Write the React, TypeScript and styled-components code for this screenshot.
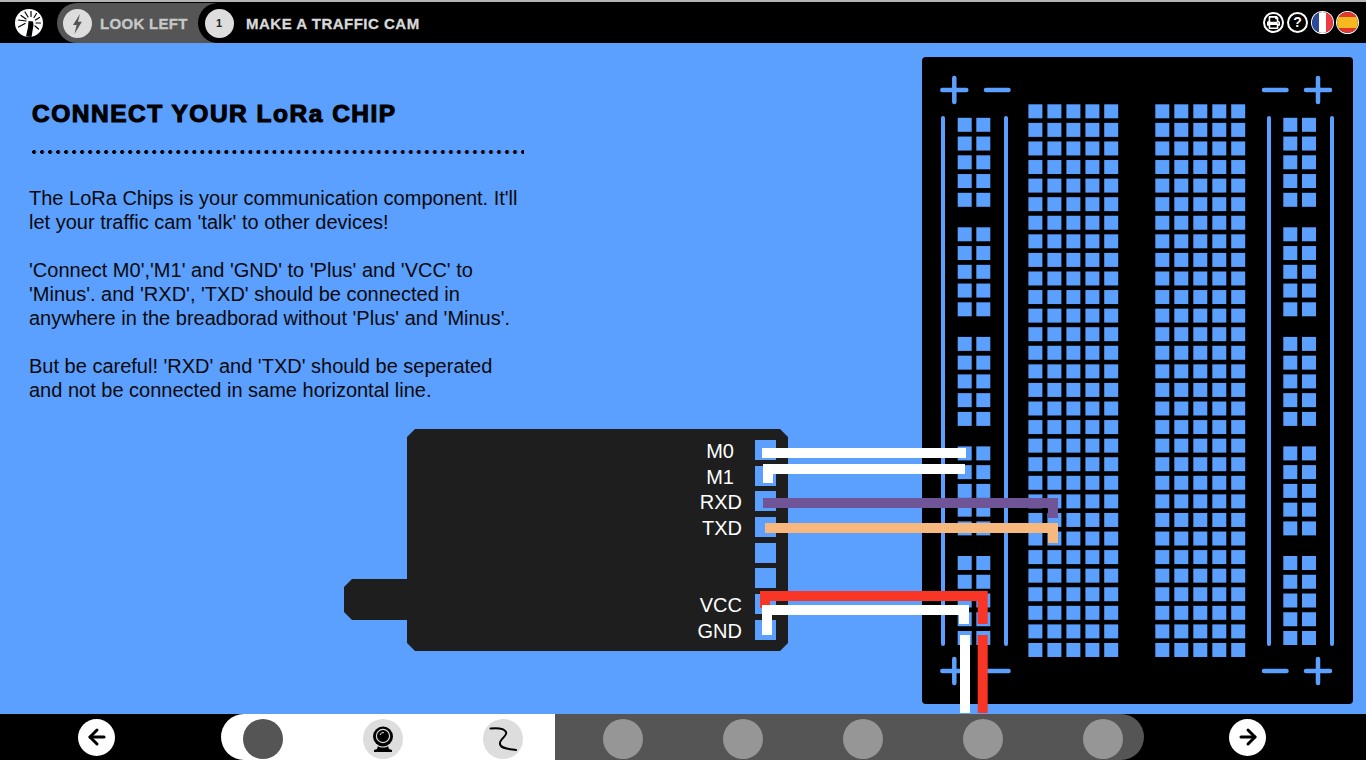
import styled, { createGlobalStyle } from 'styled-components';
import { ArrowLeft, ArrowRight } from 'lucide-react';
import { FaPrint } from 'react-icons/fa';

const BLUE = '#5b9fff';

const Global = createGlobalStyle`
  html, body { margin: 0; padding: 0; height: 100%; overflow: hidden; }
  body { font-family: "Liberation Sans", Arial, sans-serif; background: ${BLUE}; }
`;

const Page = styled.div`
  width: 1366px; height: 760px; display: flex; flex-direction: column; overflow: hidden;
`;

/* top bar */
const Header = styled.header`
  height: 43px; box-sizing: border-box; flex-shrink: 0; background: #000;
  border-top: 2px solid #b4b4b4; padding-top: 1px;
  display: flex; align-items: stretch;
`;
const LogoBox = styled.div`
  width: 57px; display: flex; align-items: center; justify-content: center;
  svg { margin-right: -1px; margin-top: -1px; }
`;
const LookPill = styled.div`
  width: 160px; margin-right: -19px; background: #555; border-radius: 20px 0 0 20px;
  display: flex; align-items: center; gap: 8px; padding-left: 6px; box-sizing: border-box;
`;
const TaskSection = styled.div`
  flex: 1; background: #000; border-radius: 20px 0 0 20px; position: relative;
  display: flex; align-items: center; gap: 12.5px; padding-left: 6.5px;
`;
const RoundBadge = styled.div`
  width: 29px; height: 29px; border-radius: 50%; background: #ddd; flex-shrink: 0;
  display: flex; align-items: center; justify-content: center;
  font-size: 11px; font-weight: 700; color: #222;
`;
const BarLabel = styled.span<{ $dim?: boolean }>`
  font-size: 15px; font-weight: 700; white-space: nowrap;
  letter-spacing: ${p => (p.$dim ? 0.3 : 0.5)}px;
  -webkit-text-stroke: 0.3px currentColor;
  color: ${p => (p.$dim ? '#c8c8c8' : '#d8d8d8')};
`;
const HeaderTools = styled.div`
  margin-left: auto; margin-right: 8px; margin-top: -2px; display: flex; align-items: center; gap: 3px;
`;
const ToolRound = styled.div`
  width: 21px; height: 21px; border: 2px solid #fff; border-radius: 50%; box-sizing: border-box;
  display: flex; align-items: center; justify-content: center;
  color: #fff; font-size: 14px; font-weight: 700;
`;
const Flag = styled.div<{ $bg: string }>`
  width: 21px; height: 21px; border-radius: 50%; background: ${p => p.$bg}; box-shadow: 0 0 0 1px #fff;
  margin: 0 0.5px;
`;

/* main stage */
const Main = styled.main`
  flex: 1; position: relative; display: flex; background: ${BLUE}; min-height: 0;
`;
const LeftColumn = styled.div`
  width: 922px; flex-shrink: 0; box-sizing: border-box; padding: 56.5px 0 0 29px;
  display: flex; flex-direction: column;
`;
const Title = styled.h1`
  margin: 0 0 0 3px; font-size: 24.5px; line-height: 28px; font-weight: 700; color: #000;
  letter-spacing: 1.5px; -webkit-text-stroke: 1.1px #000; white-space: nowrap;
`;
const DotRule = styled.div`
  margin: 22px 0 0 3px; width: 492px; height: 4px;
  background: radial-gradient(circle at 2px 2px, #000 1.8px, transparent 2.2px) 0 0 / 8.03px 4px repeat-x;
`;
const Body = styled.p`
  margin: 32.5px 0 0; font-size: 20px; line-height: 24px; color: #0a0a0a; white-space: nowrap;
`;

/* LoRa chip */
const ChipRow = styled.div`
  margin: 27px 0 0 315px; display: flex; align-items: flex-start;
`;
const ChipNub = styled.div`
  width: 63px; height: 41px; margin-top: 150px;
  background: #1e1e1e;
  clip-path: polygon(8px 0, 100% 0, 100% 100%, 8px 100%, 0 calc(100% - 8px), 0 8px);
`;
const ChipBody = styled.div`
  width: 381px; height: 222px; box-sizing: border-box; background: #1e1e1e; padding: 11px 12px 0 0;
  clip-path: polygon(8px 0, calc(100% - 8px) 0, 100% 8px, 100% calc(100% - 8px), calc(100% - 8px) 100%, 8px 100%, 0 calc(100% - 8px), 0 8px);
  display: flex; flex-direction: column; gap: 5.7px;
`;
const PinRow = styled.div`
  height: 20px; display: flex; align-items: center; justify-content: flex-end;
`;
const PinLabel = styled.span<{ $inset?: boolean }>`
  font-size: 20px; color: #fff; padding-top: 3px; margin-right: ${p => (p.$inset ? 21 : 13)}px;
`;
const PinPad = styled.div`
  width: 21px; height: 20px; background: ${BLUE};
`;

/* breadboard */
const Board = styled.svg`
  flex-shrink: 0; margin-top: 14px; width: 431px; height: 647px; display: block;
`;
const Wires = styled.svg`
  position: absolute; left: 0; top: 0; width: 1366px; height: 671px; pointer-events: none;
`;

/* bottom nav */
const Footer = styled.footer`
  height: 46px; flex-shrink: 0; background: #000; display: flex; align-items: center;
  padding-left: 78px; gap: 0;
`;
const ArrowBtn = styled.button<{ $before?: number; $after?: number }>`
  width: 37px; height: 37px; border-radius: 50%; border: 0; padding: 0; background: #fff; color: #000;
  margin: 0 ${p => p.$after ?? 0}px 0 ${p => p.$before ?? 0}px; flex-shrink: 0;
  display: flex; align-items: center; justify-content: center;
`;
const Track = styled.div`
  display: flex; height: 46px;
`;
const TrackDone = styled.div`
  width: 334px; box-sizing: border-box; background: #fff; border-radius: 23px 0 0 23px;
  padding: 5px 0 0 22px; display: flex; gap: 80px;
`;
const TrackTodo = styled.div`
  width: 589px; box-sizing: border-box; background: #555; border-radius: 0 23px 23px 0;
  padding: 5px 0 0 48px; display: flex; gap: 80px;
`;
const StepDot = styled.div<{ $tone: 'active' | 'done' | 'todo' }>`
  width: 40px; height: 40px; border-radius: 50%; flex-shrink: 0;
  background: ${p => (p.$tone === 'active' ? '#555' : p.$tone === 'done' ? '#ddd' : '#969696')};
  display: flex; align-items: center; justify-content: center;
`;

const Logo = () => (
  <svg width="30" height="30" viewBox="0 0 30 30">
    <circle cx="15" cy="15" r="14" fill="#fff" />
    <g stroke="#000" strokeWidth="1.2" strokeLinecap="round">
      <path d="M12 13 L4.5 12" />
      <path d="M12 11 L7 7.5" />
      <path d="M14 9 L11 4" />
      <path d="M17 8.5 L17 3.5" />
      <path d="M20 9.5 L22.5 5.5" />
      <path d="M21.5 12 L25.5 9.5" />
      <path d="M22 15 L26.5 15" />
      <path d="M21 18 L24.5 21" />
      <path d="M11 15.5 L4.5 19" />
    </g>
    <path d="M14.5 13 L19 13.5 L19.5 17 L17.5 29 L12 28.5 L14 19 Z" fill="#000" />
  </svg>
);

const Bolt = () => (
  <svg width="29" height="29" viewBox="0 0 29 29">
    <path d="M17 5 L10 16 L13.6 16 L11.5 25 L18.8 12.8 L15 12.8 Z" fill="#555" />
  </svg>
);

const WebcamIcon = () => (
  <svg width="26" height="28" viewBox="0 0 26 28">
    <circle cx="13" cy="11.5" r="10" fill="#000" />
    <circle cx="13" cy="11" r="6.6" fill="none" stroke="#ddd" strokeWidth="1.2" />
    <path d="M10 10 A3.4 3.4 0 0 1 14 7.6" fill="none" stroke="#ddd" strokeWidth="1" />
    <path d="M8 21 C9 23 17 23 18 21 L19 24 L22 25 L22 27 L4 27 L4 25 L7 24 Z" fill="#000" />
  </svg>
);

const WireIcon = () => (
  <svg width="40" height="40" viewBox="0 0 40 40">
    <path d="M7.5 9.5 C13 9 21 9 23 13 C25 17 16 20 17 25 C18 30 26 30 33 31" fill="none" stroke="#000" strokeWidth="2" strokeLinecap="round" />
  </svg>
);

const range = (n: number) => Array.from({ length: n }, (_, i) => i);

// board coordinates are page coordinates minus the board corner (922, 57)
const Cross = ({ x, y }: { x: number; y: number }) => (
  <path d={`M${x - 12} ${y} H${x + 12} M${x} ${y - 12} V${y + 12}`} stroke={BLUE} strokeWidth="4.5" strokeLinecap="round" />
);
const Dash = ({ x, y }: { x: number; y: number }) => (
  <path d={`M${x + 2} ${y} H${x + 24.5}`} stroke={BLUE} strokeWidth="4.5" strokeLinecap="round" />
);
const Rail = ({ x }: { x: number }) => (
  <path d={`M${x} 61 V587`} stroke={BLUE} strokeWidth="4" strokeLinecap="round" />
);

const railGroups = [60.8, 170.3, 279.9, 389.4, 499];
const railRows = railGroups.flatMap(y => range(5).map(i => y + i * 18.75));
const gridRows = range(30).map(i => 47.3 + i * 18.575);

const Breadboard = () => (
  <Board viewBox="0 0 431 647">
    <rect x="0" y="0" width="431" height="647" rx="4" fill="#000" />
    <Cross x={32.3} y={33} />
    <Dash x={62} y={33} />
    <Dash x={340} y={33} />
    <Cross x={396} y={33} />
    <Cross x={32.3} y={614} />
    <Dash x={62} y={614} />
    <Dash x={340} y={614} />
    <Cross x={396} y={614} />
    {[21, 84, 347, 410].map(x => <Rail key={x} x={x} />)}
    {[35.7, 54.3, 361.3, 380].flatMap(x =>
      railRows.map(y => <rect key={`r${x}-${y}`} x={x} y={y} width="14" height="14" fill={BLUE} />)
    )}
    {[106.4, 125.4, 144.4, 163.4, 182.2, 233.3, 252.3, 271.3, 290.3, 309.2].flatMap(x =>
      gridRows.map(y => <rect key={`g${x}-${y}`} x={x} y={y} width="14" height="14" fill={BLUE} />)
    )}
  </Board>
);

const WHITE = '#fff';
const RED = '#f93526';
const PURPLE = '#6f5597';
const PEACH = '#f6b87c';

const WireOverlay = () => (
  <Wires viewBox="0 43 1366 671">
    <g fill="none" strokeWidth="10">
      <path d="M762 453 H966" stroke={WHITE} />
      <path d="M768 483 V469 H965" stroke={WHITE} />
      <path d="M763 503 H1053 V518" stroke={PURPLE} />
      <path d="M765 528 H1053 V543" stroke={PEACH} />
      <path d="M765 608 V596 H982.7 V624" stroke={RED} />
      <path d="M767 635 V610 H964 V624" stroke={WHITE} />
      <path d="M965 635 V713" stroke={WHITE} />
      <path d="M982.7 635 V713" stroke={RED} />
    </g>
  </Wires>
);

const pins: { label: string; inset?: boolean }[] = [
  { label: 'M0', inset: true },
  { label: 'M1', inset: true },
  { label: 'RXD' },
  { label: 'TXD' },
  { label: '' },
  { label: '' },
  { label: 'VCC' },
  { label: 'GND' },
];

export default function App() {
  return (
    <Page>
      <Global />
      <Header>
        <LogoBox><Logo /></LogoBox>
        <LookPill>
          <RoundBadge><Bolt /></RoundBadge>
          <BarLabel $dim>LOOK LEFT</BarLabel>
        </LookPill>
        <TaskSection>
          <RoundBadge>1</RoundBadge>
          <BarLabel>MAKE A TRAFFIC CAM</BarLabel>
        </TaskSection>
        <HeaderTools>
          <ToolRound><FaPrint size={13} /></ToolRound>
          <ToolRound>?</ToolRound>
          <Flag $bg="linear-gradient(90deg, #2a4a9e 0 33%, #fff 33% 66%, #ee3b43 66%)" />
          <Flag $bg="linear-gradient(180deg, #e2382b 0 26%, #f7b91e 26% 74%, #e2382b 74%)" />
        </HeaderTools>
      </Header>
      <Main>
        <LeftColumn>
          <Title>CONNECT YOUR LoRa CHIP</Title>
          <DotRule />
          <Body>
            The LoRa Chips is your communication component. It'll<br />
            let your traffic cam 'talk' to other devices!<br />
            <br />
            'Connect M0','M1' and 'GND' to 'Plus' and 'VCC' to<br />
            'Minus'. and 'RXD', 'TXD' should be connected in<br />
            anywhere in the breadborad without 'Plus' and 'Minus'.<br />
            <br />
            But be careful! 'RXD' and 'TXD' should be seperated<br />
            and not be connected in same horizontal line.
          </Body>
          <ChipRow>
            <ChipNub />
            <ChipBody>
              {pins.map((pin, i) => (
                <PinRow key={i}>
                  <PinLabel $inset={pin.inset}>{pin.label}</PinLabel>
                  <PinPad />
                </PinRow>
              ))}
            </ChipBody>
          </ChipRow>
        </LeftColumn>
        <Breadboard />
        <WireOverlay />
      </Main>
      <Footer>
        <ArrowBtn $after={106}><ArrowLeft size={24} strokeWidth={3} /></ArrowBtn>
        <Track>
          <TrackDone>
            <StepDot $tone="active" />
            <StepDot $tone="done"><WebcamIcon /></StepDot>
            <StepDot $tone="done"><WireIcon /></StepDot>
          </TrackDone>
          <TrackTodo>
            {range(5).map(i => <StepDot key={i} $tone="todo" />)}
          </TrackTodo>
        </Track>
        <ArrowBtn $before={85}><ArrowRight size={24} strokeWidth={3} /></ArrowBtn>
      </Footer>
    </Page>
  );
}
